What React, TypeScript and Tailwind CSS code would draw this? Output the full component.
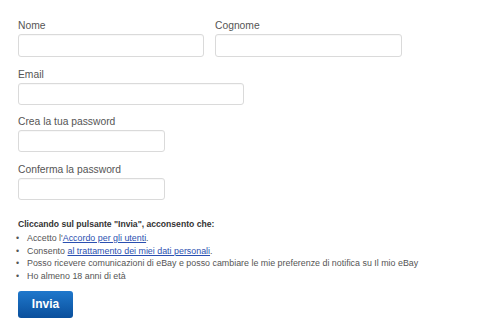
import React from "react";

function Field({
  label,
  inputClassName,
  className,
}: {
  label: string;
  inputClassName: string;
  className?: string;
}) {
  return (
    <div className={className}>
      <label className="block text-[10.3px] leading-[17px] text-[#555]">{label}</label>
      <input
        type="text"
        className={`block rounded-[3px] border border-[#dadada] bg-white shadow-[inset_0_1px_1px_rgba(0,0,0,0.03)] outline-none ${inputClassName}`}
      />
    </div>
  );
}

export default function App() {
  return (
    <div
      className="min-h-[330px] w-[496px] bg-white pl-[18px] pt-[17px]"
      style={{ fontFamily: '"Liberation Sans", Arial, sans-serif' }}
    >
      <div className="flex gap-[11px]">
        <Field label="Nome" inputClassName="h-[23px] w-[186px]" />
        <Field label="Cognome" inputClassName="h-[23px] w-[187px]" />
      </div>
      <Field className="mt-[9px]" label="Email" inputClassName="h-[22px] w-[226px]" />
      <Field className="mt-[8px]" label="Crea la tua password" inputClassName="h-[22px] w-[147px]" />
      <Field className="mt-[9px]" label="Conferma la password" inputClassName="h-[22px] w-[147px]" />

      <p className="mt-[18px] text-[8.6px] font-bold leading-[12px] text-[#333]">
        Cliccando sul pulsante "Invia", acconsento che:
      </p>
      <ul className="mt-[2px] text-[8.9px] leading-[12.7px] text-[#555]">
        {[
          <>
            Accetto l'
            <a className="text-[#2a4fb0] underline">Accordo per gli utenti</a>.
          </>,
          <>
            Consento <a className="text-[#2a4fb0] underline">al trattamento dei miei dati personali</a>.
          </>,
          <>Posso ricevere comunicazioni di eBay e posso cambiare le mie preferenze di notifica su Il mio eBay</>,
          <>Ho almeno 18 anni di età</>,
        ].map((item, i) => (
          <li key={i} className="flex">
            <span className="-ml-[2px] w-[9px] shrink-0 text-[#555]">•</span>
            <span className="ml-[2px]">{item}</span>
          </li>
        ))}
      </ul>

      <button className="mt-[8px] h-[27px] w-[55px] rounded-[3px] bg-gradient-to-b from-[#1f78cc] to-[#0a4f9c] text-[12px] font-bold text-white">
        Invia
      </button>
    </div>
  );
}
